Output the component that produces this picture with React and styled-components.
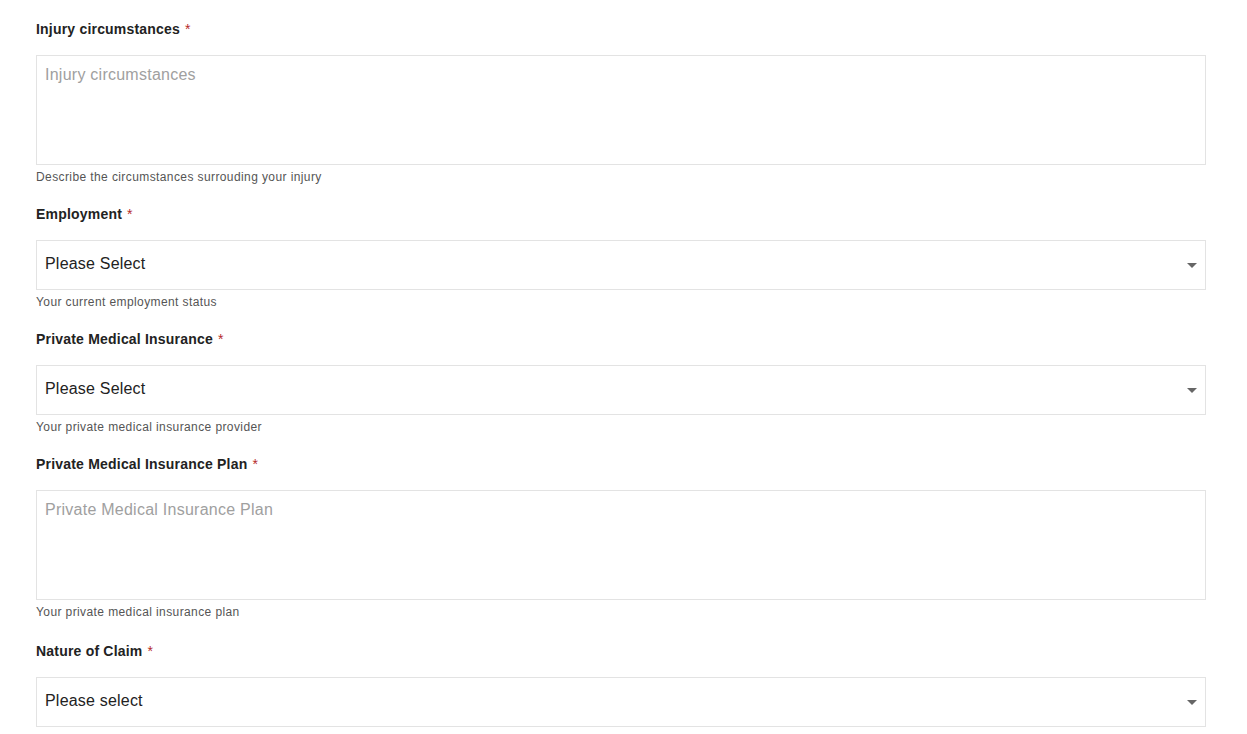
import React from 'react'
import styled, { createGlobalStyle } from 'styled-components'

const Global = createGlobalStyle`
  body {
    margin: 0;
    background: #fff;
    font-family: "Liberation Sans", Arial, sans-serif;
  }
`

const Form = styled.form`
  padding: 19px 41px 0 36px;
  display: flex;
  flex-direction: column;
  gap: 19px;
`

const Field = styled.div`
  display: flex;
  flex-direction: column;
  margin-bottom: ${(p) => (p.$extra ? '2px' : '0')};
`

const Label = styled.label`
  font-size: 14px;
  line-height: 20px;
  font-weight: bold;
  letter-spacing: 0.2px;
  color: #222;
  margin-bottom: 16px;
`

const Star = styled.span`
  color: #b52a2a;
  font-weight: normal;
  margin-left: 5px;
`

const TextArea = styled.textarea`
  display: block;
  box-sizing: border-box;
  width: 100%;
  height: 110px;
  border: 1px solid #e3e3e3;
  border-radius: 0;
  padding: 9px 8px;
  font-family: inherit;
  font-size: 16px;
  line-height: 19px;
  letter-spacing: 0.25px;
  color: #222;
  resize: none;
  outline: none;
  margin: 0;
  &::placeholder {
    color: #a0a0a0;
  }
`

const SelectWrap = styled.div`
  position: relative;
  height: 50px;
`

const Select = styled.select`
  appearance: none;
  display: block;
  box-sizing: border-box;
  width: 100%;
  height: 50px;
  border: 1px solid #e3e3e3;
  border-radius: 0;
  background: #fff;
  padding: 0 8px 4px;
  font-family: inherit;
  font-size: 16px;
  letter-spacing: 0.2px;
  color: #222;
  outline: none;
  margin: 0;
`

const Caret = styled.span`
  position: absolute;
  right: 9px;
  top: 23px;
  width: 0;
  height: 0;
  border-left: 5px solid transparent;
  border-right: 5px solid transparent;
  border-top: 5px solid #666;
  pointer-events: none;
`

const Help = styled.div`
  margin-top: 5px;
  font-size: 12px;
  line-height: 15px;
  letter-spacing: 0.4px;
  color: #555;
`

const fields = [
  { label: 'Injury circumstances', type: 'text', placeholder: 'Injury circumstances', help: 'Describe the circumstances surrouding your injury' },
  { label: 'Employment', type: 'select', value: 'Please Select', help: 'Your current employment status' },
  { label: 'Private Medical Insurance', type: 'select', value: 'Please Select', help: 'Your private medical insurance provider' },
  { label: 'Private Medical Insurance Plan', type: 'text', placeholder: 'Private Medical Insurance Plan', help: 'Your private medical insurance plan', extra: true },
  { label: 'Nature of Claim', type: 'select', value: 'Please select' },
]

const App = () => {
  return (
    <>
      <Global />
      <Form>
        {fields.map((f) => (
          <Field key={f.label} $extra={f.extra}>
            <Label>
              {f.label}
              <Star>*</Star>
            </Label>
            {f.type === 'text' ? (
              <TextArea placeholder={f.placeholder} />
            ) : (
              <SelectWrap>
                <Select defaultValue="">
                  <option value="">{f.value}</option>
                </Select>
                <Caret />
              </SelectWrap>
            )}
            {f.help && <Help>{f.help}</Help>}
          </Field>
        ))}
      </Form>
    </>
  )
}

export default App
